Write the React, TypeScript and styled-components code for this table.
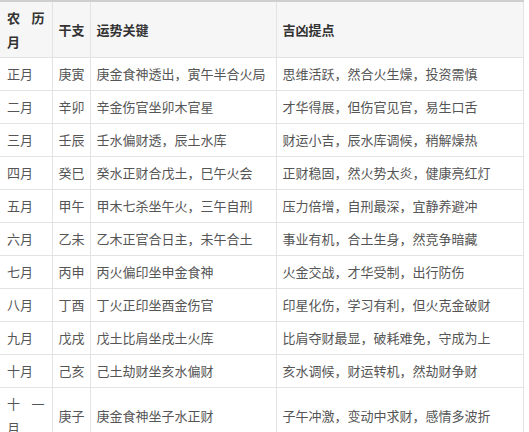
import React from "react";
import styled, { createGlobalStyle } from "styled-components";

const GlobalStyle = createGlobalStyle`
  html, body {
    margin: 0;
    padding: 0;
    background: #ffffff;
  }
  body {
    font-family: "Noto Sans CJK SC", "Liberation Sans", sans-serif;
  }
`

const Wrapper = styled.div`
  width: 524px;
  border-top: 2px solid #cfcfcf;
`

const Table = styled.table`
  width: 523px;
  border-collapse: collapse;
  table-layout: fixed;
  font-size: 13px;
  line-height: 24px;
  color: #555;
`

// 첫 열(월)은 좁게 줄바꿈되며 양끝 정렬
const HeadCell = styled.th<{ $w: number; $justify?: boolean }>`
  box-sizing: border-box;
  width: ${(p) => p.$w}px;
  background: #f6f6f6;
  color: #333;
  font-size: 13px;
  font-weight: 600;
  text-align: ${(p) => (p.$justify ? "justify" : "left")};
  text-align-last: left;
  white-space: ${(p) => (p.$justify ? "normal" : "nowrap")};
  padding: ${(p) => (p.$justify ? "4px 7px 3px 7px" : "4px 4px 3px 6px")};
  border: 1px solid #e3e3e3;
  border-top: none;
  border-left: none;
  vertical-align: middle;
`

const Cell = styled.td<{ $justify?: boolean; $first?: boolean }>`
  box-sizing: border-box;
  font-size: 13px;
  padding: ${(p) => (p.$first ? "4px 7px 4px 7px" : "4px 4px 4px 6px")};
  border: 1px solid #e3e3e3;
  border-left: none;
  text-align: ${(p) => (p.$justify ? "justify" : "left")};
  text-align-last: left;
  vertical-align: middle;
  white-space: ${(p) => (p.$justify ? "normal" : "nowrap")};
  overflow: hidden;
`

const rows = [
  ["正月", "庚寅", "庚金食神透出，寅午半合火局", "思维活跃，然合火生燥，投资需慎"],
  ["二月", "辛卯", "辛金伤官坐卯木官星", "才华得展，但伤官见官，易生口舌"],
  ["三月", "壬辰", "壬水偏财透，辰土水库", "财运小吉，辰水库调候，稍解燥热"],
  ["四月", "癸巳", "癸水正财合戊土，巳午火会", "正财稳固，然火势太炎，健康亮红灯"],
  ["五月", "甲午", "甲木七杀坐午火，三午自刑", "压力倍增，自刑最深，宜静养避冲"],
  ["六月", "乙未", "乙木正官合日主，未午合土", "事业有机，合土生身，然竞争暗藏"],
  ["七月", "丙申", "丙火偏印坐申金食神", "火金交战，才华受制，出行防伤"],
  ["八月", "丁酉", "丁火正印坐酉金伤官", "印星化伤，学习有利，但火克金破财"],
  ["九月", "戊戌", "戊土比肩坐戌土火库", "比肩夺财最显，破耗难免，守成为上"],
  ["十月", "己亥", "己土劫财坐亥水偏财", "亥水调候，财运转机，然劫财争财"],
  ["十一月", "庚子", "庚金食神坐子水正财", "子午冲激，变动中求财，感情多波折"],
];

const App = () => {
  return (
    <>
      <GlobalStyle />
      <Wrapper>
        <Table>
          <thead>
            <tr>
              <HeadCell $w={52} $justify>农历月</HeadCell>
              <HeadCell $w={38}>干支</HeadCell>
              <HeadCell $w={186}>运势关键</HeadCell>
              <HeadCell $w={247}>吉凶提点</HeadCell>
            </tr>
          </thead>
          <tbody>
            {rows.map((r) => (
              <tr key={r[0]}>
                <Cell $first $justify={r[0].length > 2}>{r[0]}</Cell>
                <Cell>{r[1]}</Cell>
                <Cell>{r[2]}</Cell>
                <Cell>{r[3]}</Cell>
              </tr>
            ))}
          </tbody>
        </Table>
      </Wrapper>
    </>
  )
}

export default App;
